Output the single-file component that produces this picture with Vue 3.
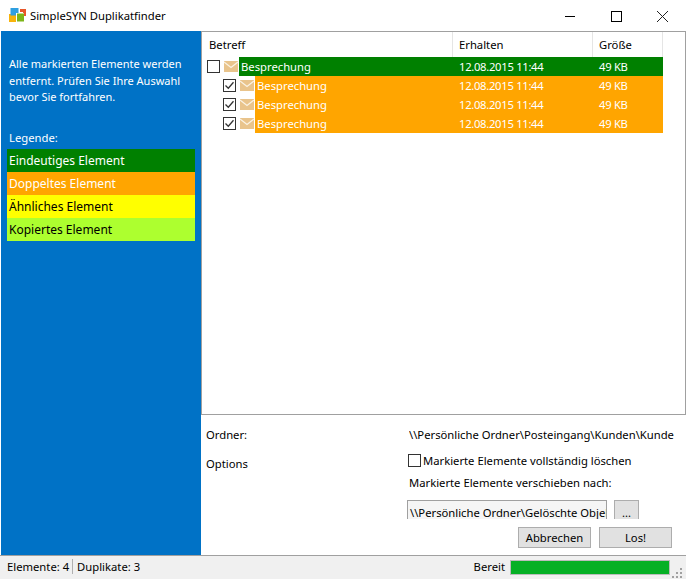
<template>
  <div class="window">
    <header class="titlebar">
      <svg class="logo" width="17" height="16" viewBox="0 0 17 16">
        <path d="M11 1h6v7h-3V4h-3z" fill="#e8562a" />
        <path d="M0 6h7v8H0z" fill="#f7b30c" />
        <rect x="1.5" y="0" width="8" height="7.5" fill="#2f9fe0" />
        <rect x="7" y="5" width="8" height="8.5" fill="#fff" />
        <rect x="8" y="5.5" width="7" height="8" fill="#7cb518" />
      </svg>
      <span class="app-title">SimpleSYN Duplikatfinder</span>
      <div class="win-buttons">
        <svg width="46" height="30" viewBox="0 0 46 30"><path d="M18 15.5h10" stroke="#000" /></svg>
        <svg width="46" height="30" viewBox="0 0 46 30"><rect x="18.5" y="10.5" width="10" height="10" fill="none" stroke="#000" /></svg>
        <svg width="46" height="30" viewBox="0 0 46 30"><path d="M18 10l11 11M29 10L18 21" stroke="#222" fill="none" /></svg>
      </div>
    </header>

    <div class="main">
      <aside class="sidebar">
        <p class="intro">Alle markierten Elemente werden entfernt. Prüfen Sie Ihre Auswahl bevor Sie fortfahren.</p>
        <p class="legend-label">Legende:</p>
        <ul class="legend">
          <li v-for="item in legend" :key="item.label" :class="item.cls">{{ item.label }}</li>
        </ul>
      </aside>

      <section class="content">
        <div class="list">
          <div class="list-head">
            <div class="col-subject">Betreff</div>
            <div class="col-date">Erhalten</div>
            <div class="col-size">Größe</div>
          </div>
          <div v-for="(row, i) in rows" :key="i" class="row" :class="{ child: row.child }">
            <span class="box" :class="{ checked: row.checked }">
              <svg v-if="row.checked" width="11" height="11" viewBox="0 0 11 11"><path d="M1.5 5.5l2.8 2.8 5.2-6" fill="none" stroke="#333" stroke-width="1.3" /></svg>
            </span>
            <svg class="mail" width="14" height="11" viewBox="0 0 14 11">
              <rect width="14" height="11" fill="#e9c48c" />
              <path d="M0 1l7 5.5L14 1" fill="none" stroke="#fbf3e4" stroke-width="1.3" />
            </svg>
            <div class="band" :class="row.child ? 'dup' : 'unique'">
              <span class="subject">{{ row.subject }}</span>
              <span class="date">{{ row.date }}</span>
              <span class="size">{{ row.size }}</span>
            </div>
          </div>
        </div>

        <div class="options">
          <div class="opt-labels">
            <div class="lbl-folder">Ordner:</div>
            <div class="lbl-options">Options</div>
          </div>
          <div class="opt-fields">
            <div class="folder-path">\\Persönliche Ordner\Posteingang\Kunden\Kunden</div>
            <label class="check-line">
              <span class="box"></span>
              Markierte Elemente vollständig löschen
            </label>
            <div class="move-label">Markierte Elemente verschieben nach:</div>
            <div class="move-line">
              <div class="path-input">\\Persönliche Ordner\Gelöschte Objekte</div>
              <button class="btn dots">...</button>
            </div>
            <div class="actions">
              <button class="btn action">Abbrechen</button>
              <button class="btn action">Los!</button>
            </div>
          </div>
        </div>
      </section>
    </div>

    <footer class="statusbar">
      <span class="stat first">Elemente: 4</span>
      <span class="stat">Duplikate: 3</span>
      <span class="state">Bereit</span>
      <div class="progress"></div>
      <svg class="grip" width="12" height="12" viewBox="0 0 12 12" fill="#a0a0a0">
        <rect x="9" y="2" width="2" height="2" />
        <rect x="5" y="6" width="2" height="2" />
        <rect x="9" y="6" width="2" height="2" />
        <rect x="1" y="10" width="2" height="2" />
        <rect x="5" y="10" width="2" height="2" />
        <rect x="9" y="10" width="2" height="2" />
      </svg>
    </footer>
  </div>
</template>

<script setup>
const legend = [
  { label: 'Eindeutiges Element', cls: 'unique' },
  { label: 'Doppeltes Element', cls: 'dup' },
  { label: 'Ähnliches Element', cls: 'similar' },
  { label: 'Kopiertes Element', cls: 'copied' },
]

const rows = [
  { subject: 'Besprechung', date: '12.08.2015 11:44', size: '49 KB', child: false, checked: false },
  { subject: 'Besprechung', date: '12.08.2015 11:44', size: '49 KB', child: true, checked: true },
  { subject: 'Besprechung', date: '12.08.2015 11:44', size: '49 KB', child: true, checked: true },
  { subject: 'Besprechung', date: '12.08.2015 11:44', size: '49 KB', child: true, checked: true },
]
</script>

<style>
html, body {
  margin: 0;
  background: #fff;
}
</style>

<style scoped>
.window {
  width: 686px;
  height: 579px;
  display: flex;
  flex-direction: column;
  background: #fff;
  color: #000;
  font-family: "Noto Sans", "Open Sans", sans-serif;
  font-size: 11.25px;
  overflow: hidden;
}
.titlebar {
  height: 31px;
  display: flex;
  align-items: center;
  padding-left: 9px;
  box-sizing: border-box;
}
.logo {
  margin-right: 4px;
  margin-top: 1px;
}
.app-title {
  margin-top: -1px;
}
.win-buttons {
  margin-left: auto;
  margin-right: 1px;
  display: flex;
}
.main {
  flex: 1;
  display: flex;
  min-height: 0;
  padding-left: 1px;
}
.sidebar {
  width: 200px;
  background: #0072c6;
  color: #fff;
  box-sizing: border-box;
  padding: 25px 6px 0 6px;
}
.intro {
  margin: 0 0 0 2px;
  font-size: 11px;
  line-height: 16.5px;
  width: 180px;
}
.legend-label {
  margin: 24px 0 3px 2px;
  line-height: 16px;
}
.legend {
  list-style: none;
  margin: 0;
  padding: 0;
  width: 188px;
  font-size: 12px;
}
.legend li {
  height: 23px;
  line-height: 23px;
  padding-left: 2px;
}
.unique { background: #008000; color: #fff; }
.dup { background: #ffa500; color: #fff; }
.similar { background: #ffff00; color: #000; }
.copied { background: #adff2f; color: #000; }
.content {
  flex: 1;
  display: flex;
  flex-direction: column;
  min-width: 0;
}
.list {
  height: 384px;
  box-sizing: border-box;
  border: 1px solid #a0a0a0;
  padding-right: 22px;
}
.list-head {
  height: 25px;
  display: flex;
  line-height: 25px;
}
.list-head > div {
  box-sizing: border-box;
  padding-left: 6px;
  border-right: 1px solid #e5e5e5;
}
.list-head > .col-subject {
  width: 251px;
  padding-left: 7px;
}
.col-date { width: 140px; }
.col-size { width: 70px; }
.row {
  height: 19px;
  display: flex;
  align-items: center;
  padding-left: 5px;
}
.row.child {
  padding-left: 21px;
}
.box {
  width: 11px;
  height: 11px;
  border: 1px solid #333;
  display: inline-flex;
  align-items: center;
  justify-content: center;
  background: #fff;
  flex: none;
}
.mail {
  margin-left: 4px;
  flex: none;
}
.band {
  flex: 1;
  display: flex;
  height: 19px;
  line-height: 19px;
  margin-left: 1px;
  color: #fff;
}
.subject {
  padding-left: 2px;
  flex: 1;
}
.date {
  width: 140px;
  letter-spacing: -0.3px;
}
.size {
  width: 64px;
  letter-spacing: -0.3px;
}
.options {
  flex: 1;
  display: flex;
  padding-left: 5px;
}
.opt-labels {
  width: 201px;
}
.lbl-folder {
  margin-top: 11px;
  line-height: 17px;
}
.lbl-options {
  margin-top: 12px;
  line-height: 17px;
}
.opt-fields {
  flex: 1;
  min-width: 0;
  padding-right: 12px;
}
.folder-path {
  margin-top: 11px;
  margin-left: 2px;
  line-height: 17px;
  white-space: nowrap;
  overflow: hidden;
}
.check-line {
  display: flex;
  align-items: center;
  gap: 2px;
  margin-top: 9px;
  margin-left: 1px;
  line-height: 17px;
}
.move-label {
  margin: 5px 0 0 2px;
  line-height: 17px;
}
.move-line {
  display: flex;
  gap: 7px;
  height: 19px;
  margin-top: 9px;
  overflow: hidden;
}
.path-input {
  width: 200px;
  height: 24px;
  box-sizing: border-box;
  border: 1px solid #a0a0a0;
  background: #f5f5f5;
  padding: 3px 0 0 2px;
  line-height: 17px;
  white-space: nowrap;
  overflow: hidden;
  flex: none;
}
.btn {
  font: inherit;
  color: #000;
  background: #e1e1e1;
  border: 1px solid #adadad;
  padding: 0;
}
.dots {
  width: 25px;
  height: 24px;
}
.actions {
  display: flex;
  justify-content: flex-end;
  gap: 8px;
  margin-top: 8px;
  padding-right: 2px;
}
.action {
  width: 73px;
  height: 21px;
}
.statusbar {
  height: 24px;
  flex: none;
  box-sizing: border-box;
  border-top: 1px solid #a0a0a0;
  background: #f0f0f0;
  display: flex;
  align-items: center;
  padding-left: 7px;
  position: relative;
}
.stat,
.state {
  margin-top: -2px;
}
.stat.first {
  border-right: 1px solid #b0b0b0;
  padding-right: 3px;
  margin-right: 4px;
}
.state {
  margin-left: auto;
  margin-right: 5px;
}
.progress {
  width: 160px;
  height: 15px;
  box-sizing: border-box;
  background: #06b025;
  border: 1px solid #bcbcbc;
  margin-right: 16px;
}
.grip {
  position: absolute;
  right: 3px;
  bottom: 1px;
}
</style>
